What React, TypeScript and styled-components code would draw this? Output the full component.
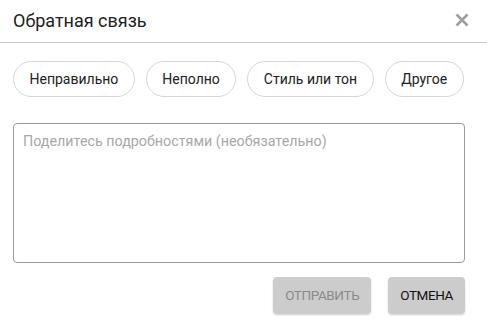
import React, { useState } from 'react';
import styled, { createGlobalStyle } from 'styled-components';

const GlobalStyle = createGlobalStyle`
  html, body {
    margin: 0;
    padding: 0;
    background: #fff;
  }
  body {
    font-family: Roboto, 'Liberation Sans', sans-serif;
  }
`;

const reasons = ['Неправильно', 'Неполно', 'Стиль или тон', 'Другое'];

const CloseIcon = () => (
  <svg width="14" height="14" viewBox="0 0 14 14">
    <path d="M1.5 1.5 L12.5 12.5 M12.5 1.5 L1.5 12.5" stroke="#9e9e9e" strokeWidth="2.6" />
  </svg>
);

const App = () => {
  const [picked, setPicked] = useState<string | null>(null);
  const [text, setText] = useState('');

  return (
    <Dialog>
      <GlobalStyle />
      <Header>
        <Title>Обратная связь</Title>
        <CloseButton aria-label="close">
          <CloseIcon />
        </CloseButton>
      </Header>
      <Body>
        <ChipRow>
          {reasons.map(r => (
            <Chip key={r} active={picked === r} onClick={() => setPicked(r)}>
              {r}
            </Chip>
          ))}
        </ChipRow>
        <Details
          placeholder="Поделитесь подробностями (необязательно)"
          value={text}
          onChange={e => setText(e.target.value)}
        />
        <Actions>
          <ActionButton disabled={!picked}>Отправить</ActionButton>
          <ActionButton>Отмена</ActionButton>
        </Actions>
      </Body>
    </Dialog>
  );
};

const Dialog = styled.div`
  width: 487px;
  height: 326px;
  background: #fff;
  display: flex;
  flex-direction: column;
`;

const Header = styled.div`
  height: 43px;
  box-sizing: border-box;
  border-bottom: 1px solid #cfcfcf;
  display: flex;
  align-items: center;
  justify-content: space-between;
  padding: 0 18px 0 13px;
`;

const Title = styled.h2`
  margin: 0;
  font-size: 18px;
  font-weight: 400;
  color: #202124;
  padding-bottom: 2px;
`;

const CloseButton = styled.button`
  border: none;
  background: none;
  padding: 0;
  display: flex;
  cursor: pointer;
  margin-bottom: 2px;
`;

const Body = styled.div`
  padding: 18px 22px 0 13px;
  display: flex;
  flex-direction: column;
`;

const ChipRow = styled.div`
  display: flex;
  gap: 11px;
`;

const Chip = styled.button<{ active: boolean }>`
  flex-shrink: 0;
  white-space: nowrap;
  height: 36px;
  box-sizing: border-box;
  padding: 0 15.5px;
  border-radius: 18px;
  border: 1px solid ${p => (p.active ? '#1a73e8' : '#d5d5dc')};
  background: ${p => (p.active ? '#e8f0fe' : '#fff')};
  font-family: Roboto, 'Liberation Sans', sans-serif;
  font-size: 14px;
  color: #202124;
  cursor: pointer;
`;

const Details = styled.textarea`
  margin-top: 26px;
  height: 140px;
  box-sizing: border-box;
  border: 1px solid #9a9a9a;
  border-radius: 4px;
  padding: 9px 9px;
  resize: none;
  font-family: Roboto, 'Liberation Sans', sans-serif;
  font-size: 14.3px;
  color: #202124;
  outline: none;

  &::placeholder {
    color: #a8a8a8;
  }
`;

const Actions = styled.div`
  margin-top: 14px;
  display: flex;
  justify-content: flex-end;
  gap: 17px;
`;

const ActionButton = styled.button`
  height: 36px;
  padding: 0 12px;
  border: none;
  border-radius: 4px;
  background: #cccccc;
  box-shadow: 0 2px 2px rgba(0, 0, 0, 0.2);
  font-family: Roboto, 'Liberation Sans', sans-serif;
  font-size: 13.5px;
  font-weight: 400;
  letter-spacing: -0.4px;
  text-transform: uppercase;
  color: #111;
  cursor: pointer;

  &:disabled {
    color: #8a8a8a;
    cursor: default;
  }
`;

export default App;
